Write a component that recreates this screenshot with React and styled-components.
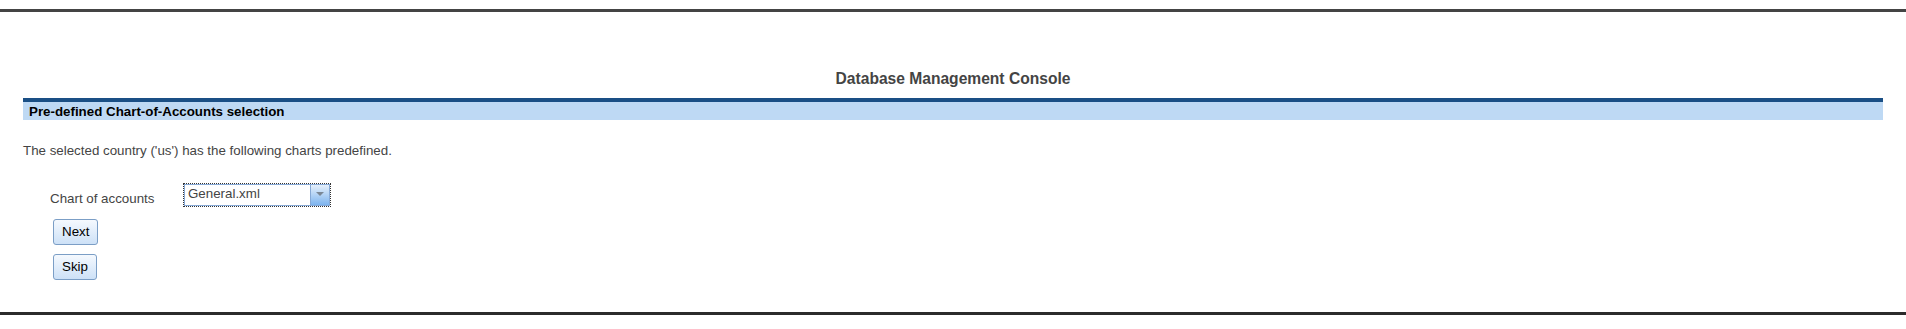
import React from "react";
import styled, { createGlobalStyle } from "styled-components";

const GlobalStyle = createGlobalStyle`
  body {
    margin: 0;
    background: #ffffff;
    font-family: "Liberation Sans", Arial, sans-serif;
    font-size: 10pt;
    color: #444444;
  }
`;

const Frame = styled.div`
  padding-top: 9px;
`;

const Page = styled.div`
  border-top: 3px solid #444444;
  border-bottom: 3px solid #2b2b2b;
  padding: 0 23px 32px;
`;

const Title = styled.h1`
  margin: 58px 0 0;
  font-size: 15.6px;
  font-weight: bold;
  line-height: 17.5px;
  text-align: center;
  color: #444444;
`;

const SectionHeader = styled.div`
  margin-top: 10.5px;
  border-top: 4px solid #1a4f85;
  background: #bed9f4;
  height: 22px;
  padding: 1px 0 0 6px;
  box-sizing: border-box;
  font-weight: bold;
  line-height: 17px;
  color: #000000;
`;

const Intro = styled.p`
  margin: 22.5px 0 0;
  line-height: 15px;
`;

const Form = styled.div`
  margin: 25px 0 0 27px;
  display: flex;
  flex-direction: column;
  align-items: flex-start;
`;

const Row = styled.div`
  display: flex;
  align-items: flex-start;
`;

const Label = styled.label`
  width: 133px;
  margin-top: 8.5px;
  line-height: 15px;
`;

const Select = styled.div`
  width: 146px;
  height: 22px;
  margin: 1px;
  outline: 1px dotted #333333;
  outline-offset: 0;
  display: flex;
  background: #ffffff;
  box-sizing: border-box;
  border: 1px solid #86a9d6;
`;

const SelectValue = styled.div`
  flex: 1;
  padding-left: 3px;
  line-height: 18px;
  color: #444444;
`;

const SelectArrow = styled.div`
  width: 18px;
  border-left: 1px solid #86a9d6;
  background: linear-gradient(#e6f0fb, #7db4ef);
  display: flex;
  align-items: center;
  justify-content: center;
`;

const Button = styled.button`
  margin-top: ${(p) => p.$gap}px;
  margin-left: 3px;
  padding: 4px 8px 5px;
  border: 1px solid #7b9ec6;
  border-radius: 3px;
  background: linear-gradient(#f5f9fe, #cde1f7);
  font-family: "Liberation Sans", Arial, sans-serif;
  font-size: 10pt;
  line-height: 15px;
  color: #000000;
  cursor: pointer;
`;

export default function App() {
  return (
    <>
      <GlobalStyle />
      <Frame>
        <Page>
          <Title>Database Management Console</Title>
          <SectionHeader>Pre-defined Chart-of-Accounts selection</SectionHeader>
          <Intro>The selected country ('us') has the following charts predefined.</Intro>
          <Form>
            <Row>
              <Label>Chart of accounts</Label>
              <Select>
                <SelectValue>General.xml</SelectValue>
                <SelectArrow>
                  <svg width="8" height="5" viewBox="0 0 8 5">
                    <path d="M0 0 L8 0 L4 4 Z" fill="#7a8796" />
                  </svg>
                </SelectArrow>
              </Select>
            </Row>
            <Button $gap={12}>Next</Button>
            <Button $gap={9}>Skip</Button>
          </Form>
        </Page>
      </Frame>
    </>
  );
}
